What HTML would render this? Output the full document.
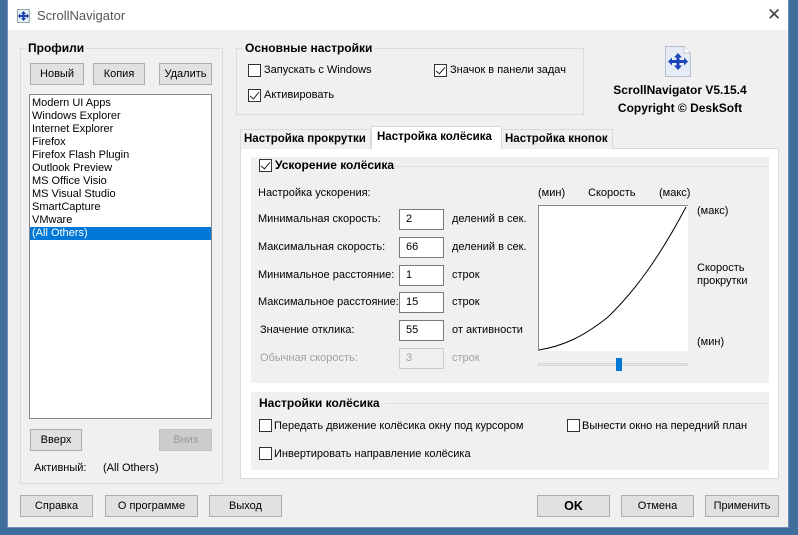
<!DOCTYPE html>
<html><head><meta charset="utf-8"><style>
*{box-sizing:border-box;margin:0;padding:0}
body{width:798px;height:535px;background:#3f6d9c;position:relative;overflow:hidden;font-family:"Liberation Sans",sans-serif;font-size:11px;color:#000}
.a{position:absolute;white-space:nowrap}
.win{position:absolute;left:7px;top:0;width:782px;height:528px;background:#f0f0f0;border:1px solid #6f8fb5}
.title{position:absolute;left:0;top:0;width:780px;height:30px;background:#fff}
.btn{position:absolute;height:22px;background:#e1e1e1;border:1px solid #adadad;text-align:center;line-height:20px}
.dis{background:#cccccc;border-color:#bfbfbf;color:#9a9a9a}
.grp{position:absolute;border:1px solid #dcdcdc}
.cb{position:absolute;width:13px;height:13px;border:1px solid #333;background:#fff}
.cb.on::after{content:"";position:absolute;left:3px;top:0px;width:4px;height:8px;border:solid #222;border-width:0 1.3px 1.3px 0;transform:rotate(40deg)}
.b{font-weight:bold;font-size:12px}
.t{font-size:11.5px}
.inp{position:absolute;left:399px;width:45px;height:21px;background:#fff;border:1px solid #7a7a7a;padding-left:6px;line-height:19px}
</style></head><body>
<div class="win"></div>
<div class="title" style="left:8px"></div>
<svg class="a" style="left:17px;top:9px" width="13" height="14" viewBox="0 0 13 14"><rect x="0.5" y="0.5" width="12" height="13" fill="#e8eef8" stroke="#9aa"/><path d="M6.5 2L9 5H7.5V6H10V4.5L12 7 10 9.5V8H7.5V9H9L6.5 12 4 9H5.5V8H3V9.5L1 7 3 4.5V6H5.5V5H4Z" fill="#1a3fa8"/></svg>
<div class="a" style="left:37px;top:8px;font-size:13px;color:#555">ScrollNavigator</div>
<div class="a" style="left:767px;top:5px;font-size:17px;color:#444">✕</div>

<div class="grp" style="left:20px;top:48px;width:203px;height:436px"></div>
<div class="a b" style="left:26px;top:41px;background:#f0f0f0;padding:0 2px">Профили</div>
<div class="btn" style="left:30px;top:63px;width:54px">Новый</div>
<div class="btn" style="left:93px;top:63px;width:52px">Копия</div>
<div class="btn" style="left:159px;top:63px;width:53px">Удалить</div>
<div class="a" style="left:29px;top:94px;width:183px;height:325px;background:#fff;border:1px solid #828790;line-height:13px;padding-top:2px">
<div style="padding-left:2px">Modern UI Apps</div><div style="padding-left:2px">Windows Explorer</div><div style="padding-left:2px">Internet Explorer</div><div style="padding-left:2px">Firefox</div><div style="padding-left:2px">Firefox Flash Plugin</div><div style="padding-left:2px">Outlook Preview</div><div style="padding-left:2px">MS Office Visio</div><div style="padding-left:2px">MS Visual Studio</div><div style="padding-left:2px">SmartCapture</div><div style="padding-left:2px">VMware</div><div style="padding-left:2px;background:#0078d7;color:#fff">(All Others)</div></div>
<div class="btn" style="left:30px;top:429px;width:52px">Вверх</div>
<div class="btn dis" style="left:159px;top:429px;width:53px">Вниз</div>
<div class="a" style="left:34px;top:462px">Активный:</div>
<div class="a" style="left:103px;top:462px">(All Others)</div>

<div class="btn" style="left:20px;top:495px;width:73px">Справка</div>
<div class="btn" style="left:105px;top:495px;width:93px">О программе</div>
<div class="btn" style="left:209px;top:495px;width:73px">Выход</div>
<div class="btn" style="left:537px;top:495px;width:73px;font-weight:bold;font-size:12.5px">OK</div>
<div class="btn" style="left:621px;top:495px;width:73px">Отмена</div>
<div class="btn" style="left:705px;top:495px;width:74px">Применить</div>

<div class="grp" style="left:236px;top:48px;width:348px;height:67px"></div>
<div class="a b" style="left:243px;top:41px;background:#f0f0f0;padding:0 2px">Основные настройки</div>
<div class="cb" style="left:248px;top:64px"></div><div class="a" style="left:264px;top:64px">Запускать с Windows</div>
<div class="cb on" style="left:248px;top:89px"></div><div class="a" style="left:264px;top:89px">Активировать</div>
<div class="cb on" style="left:434px;top:64px"></div><div class="a" style="left:450px;top:64px">Значок в панели задач</div>

<svg class="a" style="left:665px;top:46px" width="26" height="31" viewBox="0 0 26 31"><path d="M0.5 0.5H19L25.5 7V30.5H0.5Z" fill="#e6ecf5" stroke="#b8c0cc"/><path d="M19 0.5V7H25.5" fill="#fff" stroke="#b8c0cc"/><path d="M13 7L17 11.5H14.5V14H19V11.5L23 15.5 19 19.5V17H14.5V19.5H17L13 24 9 19.5H11.5V17H7V19.5L3 15.5 7 11.5V14H11.5V11.5H9Z" fill="#1a44b8"/></svg>
<div class="a b" style="left:600px;top:83px;width:160px;text-align:center">ScrollNavigator V5.15.4</div>
<div class="a b" style="left:600px;top:101px;width:160px;text-align:center">Copyright © DeskSoft</div>

<div class="a" style="left:240px;top:148px;width:539px;height:331px;background:#fff;border:1px solid #d9d9d9"></div>
<div class="a b t" style="left:240px;top:129px;width:131px;height:20px;border:1px solid #d9d9d9;border-bottom:none;background:#f0f0f0;line-height:19px;padding-left:3px">Настройка прокрутки</div>
<div class="a b t" style="left:501px;top:129px;width:112px;height:20px;border:1px solid #d9d9d9;border-bottom:none;background:#f0f0f0;line-height:19px;padding-left:3px">Настройка кнопок</div>
<div class="a b t" style="left:371px;top:126px;width:131px;height:23px;border:1px solid #d9d9d9;border-bottom:none;background:#fff;line-height:21px;padding-left:5px">Настройка колёсика</div>

<div class="a" style="left:251px;top:157px;width:518px;height:226px;background:#f0f0f0"></div>
<div class="a" style="left:392px;top:166px;width:376px;height:1px;background:#e0e0e0"></div>
<div class="cb on" style="left:259px;top:159px"></div>
<div class="a b" style="left:275px;top:158px">Ускорение колёсика</div>
<div class="a" style="left:258px;top:187px">Настройка ускорения:</div>
<div class="a" style="left:258px;top:213px">Минимальная скорость:</div><div class="inp" style="top:209px">2</div><div class="a" style="left:452px;top:213px">делений в сек.</div>
<div class="a" style="left:258px;top:241px">Максимальная скорость:</div><div class="inp" style="top:237px">66</div><div class="a" style="left:452px;top:241px">делений в сек.</div>
<div class="a" style="left:258px;top:269px">Минимальное расстояние:</div><div class="inp" style="top:265px">1</div><div class="a" style="left:452px;top:269px">строк</div>
<div class="a" style="left:258px;top:296px">Максимальное расстояние:</div><div class="inp" style="top:292px">15</div><div class="a" style="left:452px;top:296px">строк</div>
<div class="a" style="left:260px;top:324px">Значение отклика:</div><div class="inp" style="top:320px">55</div><div class="a" style="left:452px;top:324px">от активности</div>
<div class="a" style="left:260px;top:352px;color:#a0a0a0">Обычная скорость:</div><div class="inp" style="top:348px;background:#f0f0f0;border-color:#ccc;color:#a0a0a0">3</div><div class="a" style="left:452px;top:352px;color:#a0a0a0">строк</div>

<div class="a" style="left:538px;top:187px">(мин)</div>
<div class="a" style="left:588px;top:187px">Скорость</div>
<div class="a" style="left:659px;top:187px">(макс)</div>
<svg class="a" style="left:538px;top:205px" width="150" height="146" viewBox="0 0 150 146"><rect x="0" y="0" width="150" height="146" fill="#fff"/><path d="M0.5 146V0.5H150" fill="none" stroke="#888"/><path d="M1 145C25 141 45 132 70 112C95 88 120 55 148 2" fill="none" stroke="#000" stroke-width="1"/></svg>
<div class="a" style="left:697px;top:205px">(макс)</div>
<div class="a" style="left:697px;top:262px;line-height:13px">Скорость<br>прокрутки</div>
<div class="a" style="left:697px;top:336px">(мин)</div>
<div class="a" style="left:538px;top:363px;width:150px;height:3px;background:#e7e7e7;border:1px solid #d6d6d6"></div>
<div class="a" style="left:616px;top:358px;width:6px;height:13px;background:#0078d7"></div>

<div class="a" style="left:251px;top:392px;width:518px;height:78px;background:#f0f0f0"></div>
<div class="a" style="left:385px;top:403px;width:383px;height:1px;background:#e0e0e0"></div>
<div class="a b" style="left:259px;top:396px">Настройки колёсика</div>
<div class="cb" style="left:259px;top:419px"></div><div class="a" style="left:274px;top:420px">Передать движение колёсика окну под курсором</div>
<div class="cb" style="left:567px;top:419px"></div><div class="a" style="left:582px;top:420px">Вынести окно на передний план</div>
<div class="cb" style="left:259px;top:447px"></div><div class="a" style="left:274px;top:448px">Инвертировать направление колёсика</div>
</body></html>
